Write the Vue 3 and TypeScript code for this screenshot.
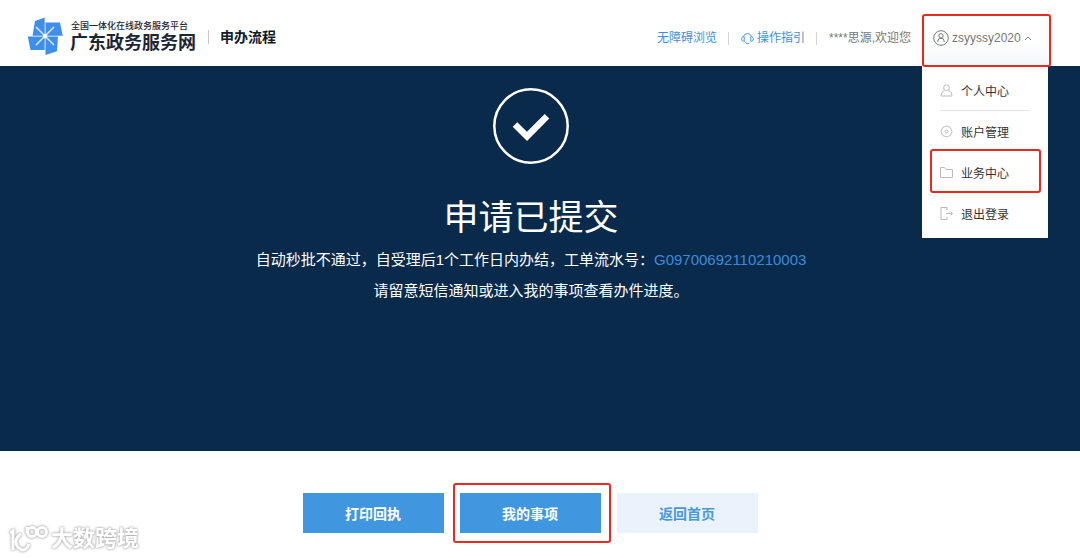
<script setup lang="ts">
import { ref } from 'vue'

interface MenuItem {
  label: string
  icon: 'person' | 'gear' | 'folder' | 'exit'
  divided?: boolean
  marked?: boolean
}

const menuOpen = ref(true)
const userName = 'zsyyssy2020'
const serialNumber = 'G09700692110210003'

const menuItems: MenuItem[] = [
  { label: '个人中心', icon: 'person', divided: true },
  { label: '账户管理', icon: 'gear' },
  { label: '业务中心', icon: 'folder', marked: true },
  { label: '退出登录', icon: 'exit' },
]
</script>

<template>
  <div class="page">
    <header class="header">
      <a class="brand" href="#" aria-label="广东政务服务网">
        <svg class="brand-mark" viewBox="0 0 36 38" aria-hidden="true">
          <g fill="#3f8eea">
            <path d="M8 4 17.700.5V18.700H5.500Z" />
            <path d="M18.500 5.500H33L35.700 18.700H18.500Z" />
            <path d="M.8 19.500H17.700V33H3.500Z" />
            <path d="M18.500 19.500H31L30 34.300 18.500 38Z" />
          </g>
          <path d="M9 10 27 28M27 10 9 28" stroke="#dceafd" stroke-width="1.500" />
          <circle cx="18.100" cy="19.100" r="2.200" fill="#fff" />
        </svg>
        <span class="brand-text">
          <span class="brand-small">全国一体化在线政务服务平台</span>
          <span class="brand-name">广东政务服务网</span>
        </span>
      </a>
      <h1 class="section-name">申办流程</h1>

      <nav class="nav">
        <a class="nav-item" href="#">无障碍浏览</a>
        <a class="nav-item" href="#">
          <svg class="headset" viewBox="0 0 14 14" aria-hidden="true">
            <path d="M2.500 5A4.700 4.700 0 0 1 11.500 5M3.500 5H2.500Q.7 5.500.7 7.500T2.500 10H3.500ZM10.500 5H11.500Q13.300 5.500 13.300 7.500T11.500 10H10.500ZM4 10.500Q5 12.500 7 12.500H9" />
          </svg>
          操作指引
        </a>
        <span class="nav-item greeting">****思源,欢迎您</span>
      </nav>

      <div class="user">
        <button class="user-button" type="button" :aria-expanded="menuOpen" @click="menuOpen = !menuOpen">
          <svg class="avatar" viewBox="0 0 16 16" aria-hidden="true">
            <circle cx="8" cy="8" r="7.300" />
            <circle cx="8" cy="5.800" r="2.200" />
            <path d="M4.800 12V11Q5 8.200 8 8.200T11.200 11V12" />
          </svg>
          <span>{{ userName }}</span>
          <svg class="caret" viewBox="0 0 8 6" aria-hidden="true"><path d="M1 5 4 2 7 5" /></svg>
        </button>
        <ul v-if="menuOpen" class="menu">
          <li v-for="item in menuItems" :key="item.label" :class="{ divided: item.divided, marked: item.marked }">
            <a href="#">
              <svg class="menu-icon" viewBox="0 0 13 13" aria-hidden="true">
                <template v-if="item.icon === 'person'">
                  <circle cx="6.500" cy="3.700" r="2.900" />
                  <path d="M4.500 6.300Q1.500 7.500 1 11.500Q1 12 1.500 12H11.500Q12 12 12 11.500Q11.500 7.500 8.500 6.300" />
                </template>
                <template v-else-if="item.icon === 'gear'">
                  <path d="M6.500 1 8.300 1.600 10.300 2.500 11.300 4.600 12 6.500 11.300 8.400 10.300 10.500 8.300 11.400 6.500 12 4.700 11.400 2.700 10.500 1.700 8.400 1 6.500 1.700 4.600 2.700 2.500 4.700 1.600Z" />
                  <circle cx="6.500" cy="6.500" r="1.500" />
                </template>
                <path v-else-if="item.icon === 'folder'" d="M.5 1.500H4.500L6 3.500H12.500V11.500H.5Z" />
                <path v-else d="M7 .5H1V12.500H7M7 10V12.500M7 .5V3M6 6.500H12.500M10.500 4.500 12.500 6.500 10.500 8.500" />
              </svg>
              {{ item.label }}
            </a>
          </li>
        </ul>
      </div>
    </header>

    <main>
      <section class="result">
        <svg class="check" viewBox="0 0 76 76" aria-hidden="true">
          <circle cx="38" cy="38" r="36.700" stroke-width="2.500" />
          <path d="M22 36.500 34 48.300 54 28.300" stroke-width="6.500" />
        </svg>
        <h2>申请已提交</h2>
        <p>自动秒批不通过，自受理后1个工作日内办结，工单流水号：<a href="#">{{ serialNumber }}</a></p>
        <p>请留意短信通知或进入我的事项查看办件进度。</p>
      </section>
      <div class="actions">
        <button type="button">打印回执</button>
        <button class="marked" type="button">我的事项</button>
        <button class="plain" type="button">返回首页</button>
      </div>
    </main>

    <div class="watermark">
      <svg viewBox="0 0 40 28" aria-hidden="true">
        <path d="M2 8 5 6V25M13 9Q8 12 8 17T14 25Q19 25 21 19" />
        <path d="M19 2V8" />
        <circle cx="24" cy="7" r="4.500" />
        <circle cx="34" cy="7" r="4.500" />
      </svg>
      <span>大数跨境</span>
    </div>
  </div>
</template>

<style>
body {
  margin: 0;
  background: #fff;
}
</style>

<style scoped>
.page {
  position: relative;
  min-height: 100vh;
  overflow: hidden;
  font-family: "Liberation Sans", "Noto Sans CJK SC", sans-serif;
  font-size: 12px;
  color: #333;
}

a {
  color: inherit;
  text-decoration: none;
}

button {
  border: 0;
  font: inherit;
  cursor: pointer;
}

svg {
  flex: none;
  fill: none;
}

.header {
  display: flex;
  align-items: center;
  height: 66px;
  padding: 0 32px 0 27px;
}

.brand {
  display: flex;
  align-items: center;
  gap: 7px;
  padding-top: 6px;
  color: #1b2634;
}

.brand-mark {
  width: 36px;
  height: 38px;
}

.brand-text {
  display: flex;
  flex-direction: column;
  padding-top: 2px;
  white-space: nowrap;
}

.brand-small {
  padding-left: 1px;
  font-size: 9px;
  font-weight: 500;
  line-height: 12px;
}

.brand-name {
  font-size: 18px;
  font-weight: 700;
  line-height: 22px;
}

.section-name {
  margin: 8px 0 0 12px;
  padding-left: 11px;
  border-left: 1px solid #c8c8c8;
  font-size: 14px;
  line-height: 14px;
  color: #111b28;
  white-space: nowrap;
}

.nav {
  display: flex;
  margin: 10px 0 0 auto;
  white-space: nowrap;
}

.nav-item {
  display: flex;
  align-items: center;
  gap: 3px;
  padding-right: 11px;
  border-right: 1px solid #d5d5d5;
  line-height: 12px;
  color: #4090dc;
}

.nav-item + .nav-item {
  padding-left: 12px;
}

.nav-item.greeting {
  border-right: 0;
  color: #777;
}

.headset {
  width: 13px;
  height: 13px;
  stroke: #4090dc;
}

.user {
  position: relative;
  align-self: stretch;
  width: 126px;
}

.user::after {
  content: "";
  position: absolute;
  z-index: 3;
  inset: 14px -3px -1px 0;
  border: 2px solid #e92a20;
  border-radius: 3px;
  pointer-events: none;
}

.user-button {
  display: flex;
  align-items: center;
  gap: 3px;
  width: 100%;
  height: 100%;
  padding: 10px 0 0 11px;
  background: linear-gradient(#fff 60%, #f3f7f9);
  color: #777;
}

.avatar {
  width: 16px;
  height: 16px;
  stroke: #777;
}

.caret {
  width: 8px;
  height: 6px;
  stroke: #777;
}

.menu {
  position: absolute;
  z-index: 2;
  top: 100%;
  left: 0;
  right: 0;
  margin: 0;
  padding: 4px 0;
  background: #fff;
  list-style: none;
}

.menu li {
  position: relative;
  padding: 0 18px;
}

.menu a {
  display: flex;
  align-items: center;
  gap: 8px;
  box-sizing: border-box;
  height: 41px;
}

.menu .divided a {
  border-bottom: 1px solid #e4e4e4;
}

.menu-icon {
  width: 13px;
  height: 13px;
  stroke: #bbb;
}

.menu .marked::after {
  content: "";
  position: absolute;
  inset: -3px 7px 0 8px;
  border: 2px solid #e92a20;
  border-radius: 3px;
  pointer-events: none;
}

.result {
  display: flex;
  flex-direction: column;
  align-items: center;
  box-sizing: border-box;
  min-height: 385px;
  padding: 22px 18px 0 0;
  background: #0a2a4c;
  color: #fff;
}

.check {
  width: 76px;
  height: 76px;
  stroke: #fff;
}

.result h2 {
  margin: 30px 0 2px;
  font-size: 35px;
  font-weight: 400;
  line-height: 48px;
}

.result p {
  margin: 0;
  font-size: 15px;
  line-height: 31px;
}

.result a {
  color: #3b8ad8;
}

.actions {
  display: flex;
  justify-content: center;
  gap: 16px;
  padding: 42px 20px 25px 0;
}

.actions button {
  position: relative;
  width: 141px;
  height: 40px;
  padding: 0;
  background: #4097e0;
  font-size: 14px;
  font-weight: 700;
  color: #fff;
}

.actions .plain {
  background: #eaf3fb;
  color: #4b97dc;
}

.actions .marked::after {
  content: "";
  position: absolute;
  inset: -10px -10px -10px -7px;
  border: 2px solid #e92a20;
  border-radius: 3px;
  pointer-events: none;
}

.watermark {
  position: absolute;
  left: 8px;
  bottom: 4px;
  display: flex;
  align-items: center;
  gap: 3px;
  filter: drop-shadow(0 0 1px #aaa) drop-shadow(0 0 1px #ccc);
  font-size: 22px;
  font-weight: 700;
  line-height: 30px;
  color: #fff;
}

.watermark svg {
  width: 40px;
  height: 28px;
  stroke: #fff;
  stroke-width: 3;
}
</style>
